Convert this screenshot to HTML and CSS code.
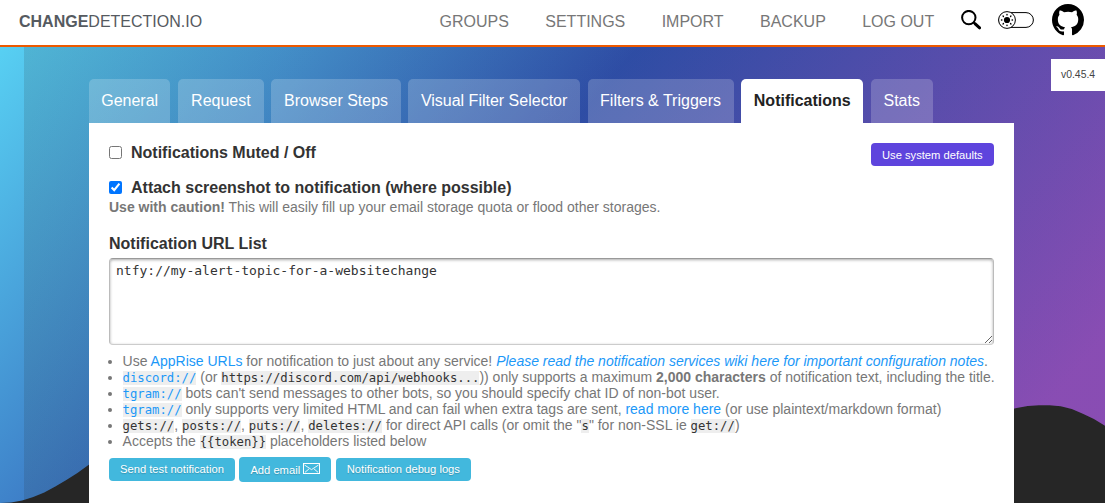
FILE: index.html
```
<!DOCTYPE html>
<html lang="en">
<head>
<meta charset="utf-8">
<title>Change Detection</title>
<link rel="stylesheet" href="styles.css">
</head>
<body>
<div class="backdrop"></div>
<div class="shade"></div>
<header class="nav">
  <a class="brand"><strong>CHANGE</strong>DETECTION.IO</a>
  <nav class="menu">
    <a>GROUPS</a><a>SETTINGS</a><a>IMPORT</a><a>BACKUP</a><a>LOG OUT</a>
  </nav>
  <svg class="search" viewBox="0 0 20 20" width="20" height="20" fill="none" stroke="#000"><circle cx="7.8" cy="7.6" r="6.7" stroke-width="2"/><path d="M12.4 12.2l2 2" stroke-width="2"/><path d="M14.2 13.8l4.4 4" stroke-width="3" stroke-linecap="round"/></svg>
  <svg class="toggle" viewBox="0 0 36 18" width="36" height="18" fill="none" stroke="#000"><rect x="1" y="1.6" width="34.4" height="14.8" rx="7.4"/><circle cx="9" cy="9" r="8.4" fill="#fff"/><circle cx="9" cy="9" r="3.1" fill="#000" stroke="none"/><path d="M9 3.5v.4M9 14.1v.4M3.5 9h.4M14.1 9h.4M5.1 5.1l.3.3M12.6 12.6l.3.3M5.1 12.9l.3-.3M12.6 5.4l.3-.3" stroke-width="1.4" stroke-linecap="round"/></svg>
  <svg class="github" viewBox="0 0 16 16" width="32" height="32"><path fill-rule="evenodd" d="M8 0C3.58 0 0 3.58 0 8c0 3.54 2.29 6.53 5.47 7.59.4.07.55-.17.55-.38 0-.19-.01-.82-.01-1.49-2.01.37-2.53-.49-2.69-.94-.09-.23-.48-.94-.82-1.13-.28-.15-.68-.52-.01-.53.63-.01 1.08.58 1.23.82.72 1.21 1.87.87 2.33.66.07-.52.28-.87.51-1.07-1.78-.2-3.64-.89-3.64-3.95 0-.87.31-1.59.82-2.15-.08-.2-.36-1.02.08-2.12 0 0 .67-.21 2.2.82.64-.18 1.32-.27 2-.27s1.36.09 2 .27c1.53-1.04 2.2-.82 2.2-.82.44 1.1.16 1.92.08 2.12.51.56.82 1.27.82 2.15 0 3.07-1.87 3.75-3.65 3.95.29.25.54.73.54 1.48 0 1.07-.01 1.93-.01 2.2 0 .21.15.46.55.38A8.01 8.01 0 0 0 16 8c0-4.42-3.58-8-8-8z"/></svg>
</header>
<div class="version">v0.45.4</div>
<main class="edit">
  <div class="tabs">
    <a>General</a><a>Request</a><a>Browser Steps</a><a>Visual Filter Selector</a><a>Filters &amp; Triggers</a><a class="active">Notifications</a><a>Stats</a>
  </div>
  <form class="panel">
    <div class="row muted">
      <label class="check"><input type="checkbox"><span>Notifications Muted / Off</span></label>
      <a class="defaults">Use system defaults</a>
    </div>
    <div class="row"><label class="check"><input type="checkbox" checked><span>Attach screenshot to notification (where possible)</span></label></div>
    <p class="hint"><strong>Use with caution!</strong> This will easily fill up your email storage quota or flood other storages.</p>
    <label class="list-label" for="urls">Notification URL List</label>
    <textarea id="urls" spellcheck="false">ntfy://my-alert-topic-for-a-websitechange</textarea>
    <ul class="notes">
      <li>Use <a>AppRise URLs</a> for notification to just about any service! <a><i>Please read the notification services wiki here for important configuration notes</i></a>.</li>
      <li><a><code>discord://</code></a> (or <code>https://discord.com/api/webhooks...</code>)) only supports a maximum <strong>2,000 characters</strong> of notification text, including the title.</li>
      <li><a><code>tgram://</code></a> bots can't send messages to other bots, so you should specify chat ID of non-bot user.</li>
      <li><a><code>tgram://</code></a> only supports very limited HTML and can fail when extra tags are sent, <a>read more here</a> (or use plaintext/markdown format)</li>
      <li><code>gets://</code>, <code>posts://</code>, <code>puts://</code>, <code>deletes://</code> for direct API calls (or omit the "<code>s</code>" for non-SSL ie <code>get://</code>)</li>
      <li>Accepts the <code>{{token}}</code> placeholders listed below</li>
    </ul>
    <div class="actions">
      <a>Send test notification</a>
      <a class="email">Add email <svg viewBox="0 0 17 11" width="17" height="11" fill="none" stroke="#fff"><rect x=".5" y=".5" width="16" height="10"/><path d="M1.5 2l7 4.6 7-4.6M2 9.3l4-3.4M15 9.3l-4-3.4" stroke-width=".9"/></svg></a>
      <a>Notification debug logs</a>
    </div>
  </form>
</main>
</body>
</html>
```
FILE: styles.css
```
* { box-sizing: border-box; }
html { height: 100%; overflow: hidden; }
body {
  margin: 0;
  height: 503px;
  overflow: hidden;
  position: relative;
  background: #262626;
  color: #333;
  font: 16px/18px "Liberation Sans", Arial, sans-serif;
}
.backdrop, .shade {
  position: absolute;
  top: 0;
  left: 0;
  width: 100%;
  height: 503px;
  z-index: -1;
  clip-path: polygon(100% 0, 0 0, 0 503px, 1% 502.5px, 2% 500.5px, 3% 497px, 4% 492.5px, 5% 486.5px, 6% 480px, 7% 473px, 8% 465px, 20% 390px, 85% 429px, 91% 410.5px, 92% 408px, 93% 406px, 94% 405.2px, 95% 405.2px, 96% 406.2px, 97% 409px, 98% 413.7px, 99% 419px, 100% 425.7px);
}
.backdrop { background: linear-gradient(130deg, #5ad8f7, #2f50af 41.07%, #9150bf 84.05%) 0 0 / 100% 650px no-repeat; }
.shade { background: linear-gradient(90deg, transparent 24px, rgba(40, 40, 40, .14) 24px, rgba(40, 40, 40, .08) 280px, rgba(40, 40, 40, .08)); }
.nav {
  height: 47px;
  padding: 0 21px 4px 19px;
  display: flex;
  align-items: center;
  background: #fff;
  border-bottom: 2px solid #ed5900;
}
.brand { color: #555a60; margin-right: auto; padding-top: 3px; }
.menu { display: flex; gap: 36.4px; padding-top: 3px; color: #777; }
.search { margin: 0 17px 2px 26.8px; }
.toggle { margin-bottom: 2px; }
.github { margin-left: 18px; margin-bottom: 2px; }
.version {
  position: absolute;
  top: 59px;
  right: 0;
  width: 54px;
  height: 32px;
  padding-left: 10px;
  background: #fff;
  color: #444;
  font-size: 10.4px;
  line-height: 32px;
}
.edit { width: 925px; margin: 32px 0 0 89px; }
.tabs { display: flex; gap: 7.6px; height: 44px; }
.tabs a {
  padding: 0 12.6px;
  border-radius: 5px 5px 0 0;
  background: rgba(255, 255, 255, .2);
  color: #fff;
  line-height: 43px;
  white-space: nowrap;
}
.tabs a:first-child { padding: 0 12.2px; }
.tabs a:nth-child(2) { padding: 0 13.2px; }
.tabs .active { background: #fff; color: #222; font-weight: bold; }
.panel { height: 380px; padding: 20px; background: #fff; }
.row { display: flex; align-items: flex-start; }
.muted { height: 35px; }
.check { display: flex; align-items: flex-start; gap: 9px; font-weight: bold; }
.check input { width: 13px; height: 13px; margin: 3px 0 0; }
.check span { padding-top: 1px; }
.defaults {
  margin-left: auto;
  height: 23px;
  padding: 0 11.3px;
  border-radius: 4px;
  background: #5e44dd;
  color: #fff;
  font-size: 11.2px;
  line-height: 24px;
}
.hint { margin: 2px 0 19px; color: #777; font-size: 14px; line-height: 16px; }
.list-label { display: block; padding-top: 1px; font-weight: bold; }
textarea {
  display: block;
  width: 885px;
  height: 87px;
  margin: 5px 0 8px;
  padding: 4px 6px;
  border: 1px solid #ccc;
  border-color: #999 #bbb #ccc;
  border-radius: 4px;
  box-shadow: inset 0 1px 3px #aaa;
  color: #333;
  font: 13px/15px "DejaVu Sans Mono", monospace;
}
.notes {
  margin: 0;
  padding-left: 13.6px;
  color: #777;
  font-size: 14px;
  line-height: 16px;
  white-space: nowrap;
}
.notes a { color: #1b98f8; }
.notes code { background: #eee; color: #333; font: 12.25px/14px "DejaVu Sans Mono", monospace; }
.notes a code { color: #1b98f8; }
.actions { display: flex; align-items: center; gap: 4.5px; margin-top: 8px; }
.actions a {
  height: 23px;
  padding: 0 11px;
  border-radius: 4px;
  background: #42b8dd;
  color: #fff;
  font-size: 11.2px;
  line-height: 23px;
  text-shadow: 0 1px 1px rgba(0, 0, 0, .2);
  white-space: nowrap;
}
.actions .email { height: 25px; line-height: 26px; }
```
